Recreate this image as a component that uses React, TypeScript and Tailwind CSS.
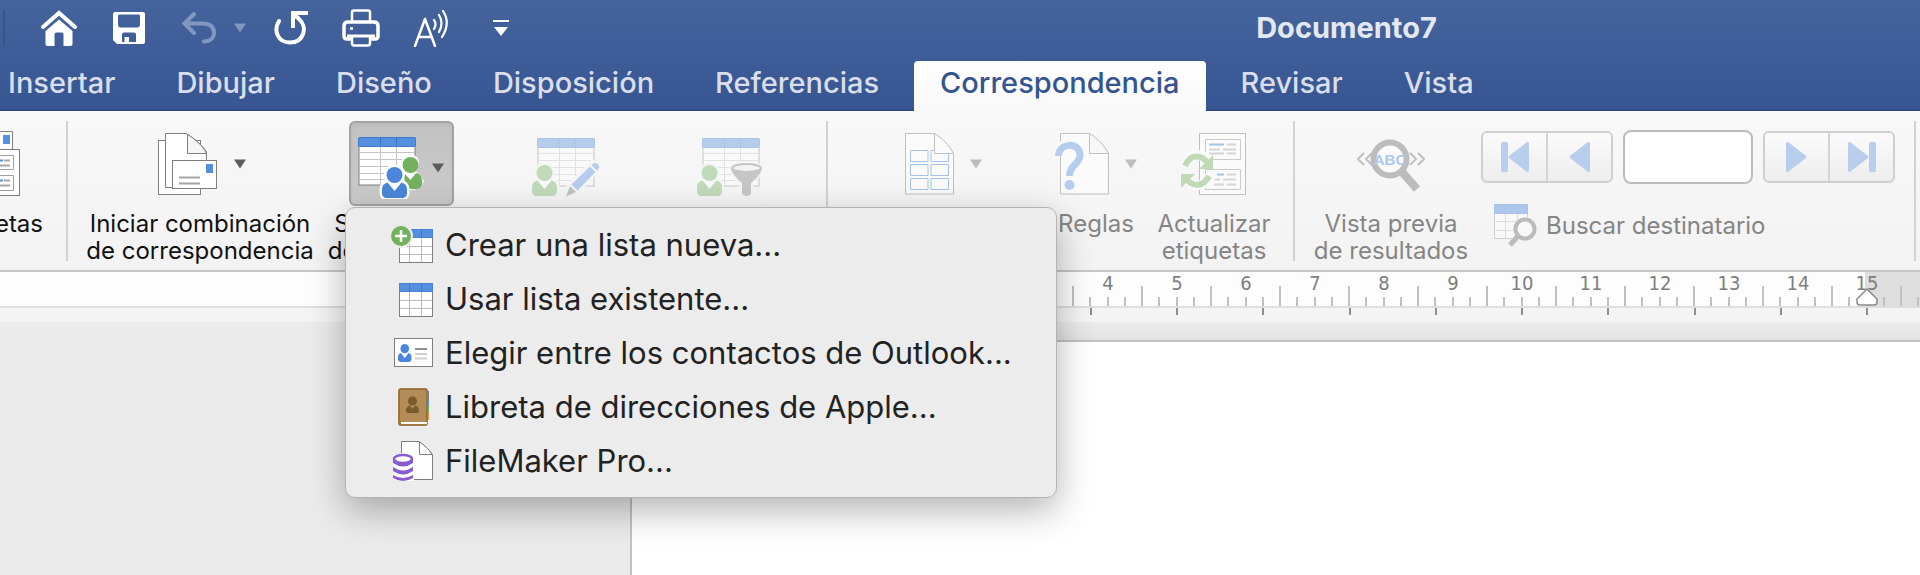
import type { ReactNode } from "react";

const tabs = ["Insertar", "Dibujar", "Diseño", "Disposición", "Referencias", "Correspondencia", "Revisar", "Vista"];

const activeTab = "Correspondencia";

const rulerNumbers = [4, 5, 6, 7, 8, 9, 10, 11, 12, 13, 14, 15];

function Caret({ className = "text-[#5c5c5c]" }: { className?: string }) {
  return (
    <svg className={`shrink-0 ${className}`} width="12" height="10" viewBox="0 0 12 10" fill="currentColor">
      <path d="M0 0.5H12L6 9.5Z" />
    </svg>
  );
}

function Person({ x, y, fill, halo }: { x: number; y: number; fill: string; halo: string }) {
  const body =
    "M5.500 15.500C1.800 16.500 0 19 0 22.500V26C0 29 2 31 5 31H20C23 31 25 29 25 26V22.500C25 19 23.200 16.500 19.500 15.500L12.500 24Z";
  return (
    <g transform={`translate(${x} ${y})`}>
      <circle cx="12.500" cy="8" r="8" fill={halo} stroke={halo} strokeWidth="5" />
      <path d={body} fill={halo} stroke={halo} strokeWidth="5" />
      <path d="M7 15H18L12.500 24Z" fill="#fff" />
      <path d={body} fill={fill} />
      <circle cx="12.500" cy="8" r="8" fill={fill} />
    </g>
  );
}

function Sheet() {
  return (
    <g>
      <rect x="1" y="1" width="56" height="47" fill="#fff" stroke="#7f7f7f" />
      <path d="M1 15.500H57M1 22.500H57M1 29.500H57M1 36.500H57M1 42.500H57M22.500 10V48M38.500 10V48" stroke="#c4c4c4" fill="none" />
      <rect x="0.500" y="0.500" width="57" height="9" rx="1" fill="#5590e0" stroke="#4079c8" />
      <path d="M22.500 1V9M38.500 1V9" stroke="#3f76c2" />
    </g>
  );
}

function RecipientsIcon() {
  return (
    <svg width="66" height="62" viewBox="0 0 66 62" className="shrink-0">
      <Sheet />
      <path d="M44 40Q38 22 52 17Q66 20 58 34L66 44Q64 54 50 53Z" fill="#fff" />
      <path d="M47 37C44 38 48 53 55 52H59C64 51 65 47 64 43C63 38 61 37 58 36L52.500 43Z" fill="#74b15f" />
      <circle cx="52.500" cy="28" r="8" fill="#74b15f" />
      <Person x={24} y={30} fill="#4b86dc" halo="#fff" />
    </svg>
  );
}

function EditRecipientsIcon() {
  return (
    <svg width="68" height="60" viewBox="0 0 68 60" className="shrink-0 opacity-40">
      <g transform="translate(5 0)">
        <Sheet />
      </g>
      <Person x={0} y={27} fill="#74b15f" halo="#f5f5f5" />
      <path d="M34 59L37 47L60 24Q66 23 68 29L45 55Z" fill="#f5f5f5" stroke="#f5f5f5" strokeWidth="4" />
      <path d="M34 58.500L38 48L44 54Z" fill="#777" />
      <path d="M39.500 46.500L58 28.500L63.500 34L45.500 52.500Z" fill="#5590e0" />
      <path d="M59.500 27C62 24.500 64 24.500 66 26.500S67.500 30 65 32.500Z" fill="#5590e0" />
    </svg>
  );
}

function FilterRecipientsIcon() {
  return (
    <svg width="66" height="60" viewBox="0 0 66 60" className="shrink-0 opacity-40">
      <g transform="translate(5 0)">
        <Sheet />
      </g>
      <Person x={0} y={27} fill="#74b15f" halo="#f5f5f5" />
      <path d="M34 30Q36 25 49 25T65 30Q62 38 54 45V58H44V45Q36 38 34 30Z" fill="#f5f5f5" stroke="#f5f5f5" strokeWidth="4" />
      <path d="M34 30Q35 37 45 45V56Q49.500 60 54 56V45Q64 37 65 30Z" fill="#7f7f7f" />
      <ellipse cx="49.500" cy="30" rx="14.500" ry="4" fill="#f0f0f0" stroke="#7f7f7f" strokeWidth="2" />
    </svg>
  );
}

function MergeIcon() {
  return (
    <svg width="64" height="62" viewBox="-4 0 64 62" className="shrink-0">
      <rect x="0.500" y="7.500" width="42" height="54" fill="#fff" stroke="#7f7f7f" />
      <path d="M7.500 0.500H28C36 5 44 12 48.500 19V54.500H7.500Z" fill="#fff" stroke="#7f7f7f" />
      <path d="M29.500 1.500V20.500H48.500C45 13 37 6 29.500 1.500Z" fill="#f5f5f5" stroke="#7f7f7f" />
      <rect x="14.500" y="27.500" width="44" height="28" fill="#fff" stroke="#7f7f7f" />
      <rect x="48" y="31" width="7" height="9" fill="#5590e0" />
      <path d="M21 44.500H42M21 50.500H42" stroke="#a6a6a6" strokeWidth="2" />
    </svg>
  );
}

function EnvelopesIcon() {
  return (
    <svg width="60" height="66" viewBox="0 0 60 66" className="shrink-0">
      <path d="M8 0.500H52.500V30H8Z" fill="#fff" stroke="#7f7f7f" />
      <rect x="43" y="4" width="7" height="9" fill="#5590e0" />
      <rect x="8" y="18.500" width="51.500" height="46" fill="#fff" stroke="#7f7f7f" />
      <path d="M20 24.500H53.500V38.500H20ZM20 44.500H53.500V59.500H20Z" fill="none" stroke="#a0a0a0" />
      <path d="M24 29.500H43M24 49.500H43" stroke="#5590e0" strokeWidth="2" />
      <path d="M44 29.500H50M24 34.500H50M44 49.500H50M24 54.500H50" stroke="#a6a6a6" strokeWidth="2" />
    </svg>
  );
}

function LabelsIcon() {
  return (
    <svg width="49" height="62" viewBox="0 0 49 62" className="shrink-0 opacity-50">
      <path d="M0.500 0.500H29C37 5 44 12 48.500 20.500V61H0.500Z" fill="#fff" stroke="#8b8b8b" />
      <path
        d="M5.500 17.500H23V28.500H5.500ZM26 17.500H43.500V28.500H26ZM5.500 31.500H23V42.500H5.500ZM26 31.500H43.500V42.500H26ZM5.500 45.500H23V56.500H5.500ZM26 45.500H43.500V56.500H26Z"
        fill="#fff"
        stroke="#5590e0"
      />
      <path d="M29.500 0.500C37 5 44 12 48.500 20.500H29.500Z" fill="#fff" stroke="#8b8b8b" />
    </svg>
  );
}

function RulesIcon() {
  return (
    <svg width="54" height="62" viewBox="0 0 54 62" className="shrink-0 opacity-50">
      <path d="M5.500 0.500H34C42 5 49 12 53.500 20.500V61H5.500Z" fill="#fff" stroke="#8b8b8b" />
      <path d="M34.500 0.500C42 5 49 12 53.500 20.500H34.500Z" fill="#fafafa" stroke="#8b8b8b" />
      <path d="M2 23C5 7 25 9 25 22C25 31 15 31 15 44" fill="none" stroke="#fff" strokeWidth="11" />
      <path d="M3.500 23C4 9 25 9 25 22C25 32 14.500 31 14.500 43" fill="none" stroke="#76a4e6" strokeWidth="7" />
      <circle cx="14.500" cy="52" r="5" fill="#76a4e6" />
    </svg>
  );
}

function UpdateLabelsIcon() {
  return (
    <svg width="66" height="62" viewBox="0 0 66 62" className="shrink-0 opacity-50">
      <rect x="18.500" y="0.500" width="46" height="61" fill="#fff" stroke="#8b8b8b" />
      <path d="M24.500 6.500H59.500V26.500H24.500ZM24.500 36.500H59.500V56.500H24.500Z" fill="none" stroke="#a0a0a0" />
      <path d="M28 11.500H43M36 41.500H43" stroke="#5590e0" strokeWidth="2" />
      <path
        d="M46 11.500H55M28 16.500H39M42 16.500H55M28 20.500H43M46 20.500H55M46 41.500H55M34 46.500H39M42 46.500H55M33 51.500H43M46 51.500H55"
        stroke="#b5b5b5"
        strokeWidth="2"
      />
      <path d="M3 34C8 18 22 20 27 28M29 43C22 56 11 54 5 46" fill="none" stroke="#fff" strokeWidth="10" />
      <path d="M4 33C9 21 20 21 26 29" fill="none" stroke="#8bbf79" strokeWidth="6" />
      <path d="M32 22V36H18Z" fill="#8bbf79" />
      <path d="M28 43C22 54 13 54 6 47" fill="none" stroke="#8bbf79" strokeWidth="6" />
      <path d="M0 55V41H14Z" fill="#8bbf79" />
    </svg>
  );
}

function PreviewIcon() {
  return (
    <svg width="68" height="60" viewBox="0 0 68 60" className="shrink-0 opacity-45">
      <path d="M7 19L1 25L7 31M15 19L9 25L15 31M53 19L59 25L53 31M61 19L67 25L61 31" fill="none" stroke="#7f7f7f" strokeWidth="2" />
      <path d="M45 38L60 55" stroke="#777" strokeWidth="8" />
      <circle cx="33" cy="25" r="16.500" fill="#fff" stroke="#777" strokeWidth="6" />
      <text
        x="33"
        y="31"
        textAnchor="middle"
        fontSize="15"
        fontWeight="700"
        fontFamily="'Liberation Sans Narrow', 'Liberation Sans', sans-serif"
        fill="#5590e0"
      >
        ABC
      </text>
    </svg>
  );
}

function FindRecipientIcon() {
  return (
    <svg width="43" height="43" viewBox="0 0 43 43" className="shrink-0 opacity-45">
      <rect x="0.500" y="0.500" width="33" height="34" fill="#fff" stroke="#a0a0a0" />
      <path d="M0 17.500H33M0 26.500H33M11.500 9V34M23.500 9V34" stroke="#c4c4c4" />
      <rect x="0.500" y="0.500" width="33" height="9" fill="#5590e0" stroke="#4a85d6" />
      <circle cx="31" cy="25" r="12" fill="#f5f5f5" />
      <path d="M24 32L16 41" stroke="#777" strokeWidth="5" />
      <circle cx="31" cy="25" r="9.500" fill="#fff" stroke="#777" strokeWidth="4" />
    </svg>
  );
}

function SmallTable({ add = false }: { add?: boolean }) {
  return (
    <svg width="42" height="38" viewBox="0 0 42 38">
      <rect x="8.500" y="3.500" width="33" height="33" fill="#fff" stroke="#7f7f7f" />
      <path d="M9 20.500H41M9 28.500H41M18.500 12V36M30.500 12V36" stroke="#bdbdbd" />
      <rect x="8.500" y="3.500" width="33" height="8" fill="#5590e0" stroke="#4a82d2" />
      <path d="M18.500 4V11M30.500 4V11" stroke="#3f76c2" />
      {add && (
        <g>
          <circle cx="10" cy="10" r="12" fill="#ececec" />
          <circle cx="10" cy="10" r="10" fill="#74b15f" />
          <path d="M10 4V16M4 10H16" stroke="#fff" strokeWidth="2.500" />
        </g>
      )}
    </svg>
  );
}

function ContactCard() {
  return (
    <svg width="42" height="38" viewBox="0 0 42 38">
      <rect x="3.500" y="4.500" width="38" height="28" fill="#fff" stroke="#7f7f7f" />
      <g transform="translate(7 10) scale(0.54 0.58)">
        <Person x={0} y={0} fill="#4b86dc" halo="#fff" />
      </g>
      <path d="M24 15H36" stroke="#8f8f8f" strokeWidth="2" />
      <path d="M24 20H36M24 24.500H36" stroke="#d0d0d0" strokeWidth="2" />
    </svg>
  );
}

function AddressBook() {
  return (
    <svg width="42" height="40" viewBox="0 0 42 40">
      <rect x="33" y="4" width="5" height="9" fill="#7d7d7d" />
      <rect x="33" y="12" width="5" height="7" fill="#5590e0" />
      <rect x="33" y="19" width="5" height="7" fill="#74b15f" />
      <rect x="33" y="26" width="5" height="7" fill="#f0923f" />
      <rect x="7" y="1" width="30" height="38" rx="3" fill="#a17a45" />
      <rect x="8.500" y="2.500" width="27" height="33" rx="2" fill="#b38c57" stroke="#94703f" />
      <path d="M10 36H36" stroke="#fff" strokeWidth="2" />
      <circle cx="21.500" cy="14" r="4.500" fill="#7b5a2b" />
      <path d="M15 24Q15 19 19 18.500L21.500 22L24 18.500Q28 19 28 24Q28 26 25 26H18Q15 26 15 24Z" fill="#7b5a2b" />
    </svg>
  );
}

function FileMaker() {
  return (
    <svg width="42" height="40" viewBox="0 0 42 40">
      <path d="M10.500 0.500H28C33 4 38 8 41.500 13.500V38.500H10.500Z" fill="#fff" stroke="#7f7f7f" />
      <path d="M28.500 1V13.500H41C38 8 33 4 28.500 1Z" fill="#fff" stroke="#7f7f7f" />
      <path d="M0 12H23V40H0Z" fill="#ececec" />
      <path d="M12 12H23V40H12Z" fill="#fff" />
      <path d="M2 14H22V38Q12 42 2 38Z" fill="#fff" />
      <path d="M2 18V22Q12 29 22 22V18ZM2 26V30Q12 37 22 30V26Q12 33 2 26ZM2 34V37Q12 43 22 37V34Q12 40 2 34Z" fill="#8a5bd0" />
      <ellipse cx="12" cy="18" rx="9" ry="4" fill="#fff" stroke="#8a5bd0" strokeWidth="2.500" />
    </svg>
  );
}

const menuItems: { label: string; icon: ReactNode }[] = [
  { label: "Crear una lista nueva...", icon: <SmallTable add /> },
  { label: "Usar lista existente...", icon: <SmallTable /> },
  { label: "Elegir entre los contactos de Outlook...", icon: <ContactCard /> },
  { label: "Libreta de direcciones de Apple...", icon: <AddressBook /> },
  { label: "FileMaker Pro...", icon: <FileMaker /> },
];

function QuickButton({ label, children }: { label: string; children: ReactNode }) {
  return (
    <button aria-label={label} className="flex w-[70px] shrink-0 items-center justify-center text-white">
      {children}
    </button>
  );
}

function QuickAccess() {
  return (
    <div className="flex h-14 items-center pl-[3px]">
      <div className="h-9 w-[2px] bg-[#375488]" />
      <div className="flex pl-[19px]">
        <QuickButton label="Inicio">
          <svg width="36" height="36" viewBox="0 0 36 36" fill="none">
            <path d="M2 17L18 3L34 17" stroke="currentColor" strokeWidth="4" strokeLinecap="round" strokeLinejoin="miter" />
            <path d="M18 9.500L31.500 21V34Q31.500 36 29.500 36H22.500V24.500Q22.500 22.500 20.500 22.500H15.500Q13.500 22.500 13.500 24.500V36H6.500Q4.500 36 4.500 34V21Z" fill="currentColor" />
          </svg>
        </QuickButton>
        <QuickButton label="Guardar">
          <svg width="32" height="32" viewBox="0 0 32 32" fill="currentColor" fillRule="evenodd">
            <path d="M2 0H30Q32 0 32 2V30Q32 32 30 32H4L0 28V2Q0 0 2 0ZM6 2.500Q5 2.500 5 4V12Q5 15.500 8 15.500H24Q27 15.500 27 12V4Q27 2.500 26 2.500ZM11 20.500Q9 20.500 9 22.500V30H11.500V25H16V30H23V22.500Q23 20.500 21 20.500Z" />
          </svg>
        </QuickButton>
        <QuickButton label="Deshacer">
          <svg width="34" height="32" viewBox="0 0 34 32" fill="none" stroke="#8297c0" strokeWidth="4" strokeLinecap="round">
            <path d="M12 2L2.500 11.500L12 21M3 11.500H20C28 11.500 32 15 32 20.500C32 26 28 29.500 22 29.500" />
          </svg>
        </QuickButton>
        <button aria-label="Opciones de deshacer" className="flex w-[22px] items-center">
          <Caret className="text-[#8297c0]" />
        </button>
        <QuickButton label="Rehacer">
          <svg width="34" height="34" viewBox="0 0 34 34" fill="none" stroke="currentColor" strokeWidth="4">
            <path d="M5 10C-1 20 4 31.500 16 31.500C30 31.500 34 16 25 8Q22 5 19 3" strokeLinecap="round" />
            <path d="M34 2H19V17" />
          </svg>
        </QuickButton>
        <QuickButton label="Imprimir">
          <svg width="38" height="38" viewBox="0 0 38 38" fill="none" stroke="currentColor" strokeWidth="2.500">
            <path d="M10 13V3.500Q10 1.500 12 1.500H26Q28 1.500 28 3.500V13" />
            <path d="M9 30H5Q2 30 2 27V17Q2 13 6 13H32Q36 13 36 17V27Q36 30 33 30H29" strokeWidth="3.500" />
            <path d="M5 27H33" strokeWidth="3" />
            <path d="M10 28V34Q10 36.500 12 36.500H26Q28 36.500 28 34V28" />
            <path d="M8 19.500H11" />
          </svg>
        </QuickButton>
        <QuickButton label="Leer en voz alta">
          <svg width="37" height="38" viewBox="0 0 37 38" fill="none" stroke="currentColor" strokeWidth="2.500" strokeLinecap="round" strokeLinejoin="round">
            <path d="M2 37L12 10L22 37M5.500 28H18.500" />
            <path d="M21 11Q24 15 21 20M26 6Q31 14 26 23M30 2Q38 14 29 28" strokeWidth="2.200" />
          </svg>
        </QuickButton>
        <QuickButton label="Personalizar barra">
          <svg width="16" height="16" viewBox="0 0 16 16" fill="currentColor">
            <path d="M0 0H16V2H0ZM1 7H15L8 16Z" />
          </svg>
        </QuickButton>
      </div>
      <h1 className="flex-1 pl-[237px] text-center text-[29px] leading-8 font-bold whitespace-nowrap text-[#e3e7f0]">Documento7</h1>
    </div>
  );
}

function Tabs() {
  return (
    <nav className="flex gap-[9px] pt-[5px]">
      {tabs.map((tab, index) => (
        <button
          key={tab}
          className={
            tab === activeTab
              ? "h-[50px] rounded-t bg-gradient-to-b from-white to-[#f8f8f8] px-[26px] pb-[7px] text-[29px] font-medium text-[#34558f]"
              : index === 0
                ? "h-[50px] pr-[26px] pb-[7px] pl-2 text-[29px] font-medium text-[#d9deea]"
                : "h-[50px] px-[26px] pb-[7px] text-[29px] font-medium text-[#d9deea]"
          }
        >
          {tab}
        </button>
      ))}
    </nav>
  );
}

function Tool({ className, icon, lines, caret, disabled, name }: {
  className: string;
  icon: ReactNode;
  lines?: string[];
  caret?: boolean;
  disabled?: boolean;
  name?: string;
}) {
  return (
    <button
      aria-label={name}
      disabled={disabled}
      className={`flex shrink-0 flex-col items-center text-[24px] leading-[27px] whitespace-nowrap ${disabled ? "text-[#858585]" : "text-[#111]"} ${className}`}
    >
      <span className="flex h-[85px] items-center gap-4">
        {icon}
        {caret && <Caret className={disabled ? "text-[#bdbdbd]" : "text-[#5c5c5c]"} />}
      </span>
      <span className="mt-1">
        {lines?.map((line) => (
          <span key={line} className="block">
            {line}
          </span>
        ))}
      </span>
    </button>
  );
}

function Separator() {
  return <div className="h-[140px] w-[2px] shrink-0 bg-[#d2d2d2]" />;
}

function NavPair({ labels, children }: { labels: string[]; children: ReactNode[] }) {
  return (
    <div className="flex h-[52px] w-[132px] divide-x-2 divide-[#d4d4d4] rounded-md border-2 border-[#cfcfcf] bg-gradient-to-b from-[#fbfbfb] to-[#ededed]">
      {labels.map((label, index) => (
        <button key={label} aria-label={label} disabled className="flex flex-1 items-center justify-center text-[#b9cdec]">
          {children[index]}
        </button>
      ))}
    </div>
  );
}

function Ribbon() {
  return (
    <div className="flex h-[161px] items-start border-b-2 border-[#c6c6c6] bg-gradient-to-b from-[#f8f8f8] to-[#f3f3f3] pt-[10px]">
      <div className="flex w-[66px] shrink-0 justify-end overflow-hidden pr-[23px]">
        <button className="flex shrink-0 flex-col items-end text-[24px] leading-[27px] text-[#111]">
          <span className="flex h-[85px] items-center pr-[23px]">
            <EnvelopesIcon />
          </span>
          <span className="mt-1">Etiquetas</span>
        </button>
      </div>
      <Separator />
      <div className="flex pr-7">
        <Tool className="w-[264px]" icon={<MergeIcon />} lines={["Iniciar combinación", "de correspondencia"]} caret />
        <button
          className="flex w-[138px] flex-col items-center text-[24px] leading-[27px] whitespace-nowrap text-[#111]"
          aria-haspopup="menu"
          aria-expanded
        >
          <span className="flex h-[85px] w-[105px] items-center justify-center gap-2 rounded-md border-2 border-[#a3a3a3] bg-gradient-to-b from-[#c2c2c2] to-[#cbcbcb] pt-2 shadow-inner">
            <RecipientsIcon />
            <Caret />
          </span>
          <span className="mt-1 block">Seleccionar</span>
          <span className="block">destinatarios</span>
        </button>
        <Tool className="w-[192px] pt-1" icon={<EditRecipientsIcon />} name="Editar lista de destinatarios" disabled />
        <Tool className="w-[136px] pt-1" icon={<FilterRecipientsIcon />} name="Filtrar destinatarios" disabled />
      </div>
      <Separator />
      <div className="flex pr-[19px] pl-5">
        <Tool className="w-[190px]" icon={<LabelsIcon />} name="Insertar campo combinado" caret disabled />
        <Tool className="w-[116px]" icon={<RulesIcon />} lines={["Reglas"]} caret disabled />
        <Tool className="w-[120px]" icon={<UpdateLabelsIcon />} lines={["Actualizar", "etiquetas"]} disabled />
      </div>
      <Separator />
      <div className="flex pl-[9px]">
        <Tool className="w-[174px]" icon={<PreviewIcon />} lines={["Vista previa", "de resultados"]} disabled />
        <div className="flex flex-col pt-[9px] pl-[3px]">
          <div className="flex items-center gap-[10px]">
            <NavPair labels={["Primer registro", "Registro anterior"]}>
              <svg width="28" height="30" viewBox="0 0 28 30" fill="currentColor">
                <rect width="7" height="30" rx="2" />
                <path d="M28 1V29Q28 30 26 30L8 16Q7 15 8 14L26 0Q28 0 28 1Z" />
              </svg>
              <svg width="21" height="30" viewBox="0 0 21 30" fill="currentColor">
                <path d="M21 1V29Q21 30 19 30L1 16Q0 15 1 14L19 0Q21 0 21 1Z" />
              </svg>
            </NavPair>
            <input aria-label="Número de registro" className="h-[54px] w-[130px] rounded-lg border-2 border-[#bcbcbc] bg-white px-2" />
            <NavPair labels={["Registro siguiente", "Último registro"]}>
              <svg width="21" height="30" viewBox="0 0 21 30" fill="currentColor">
                <path d="M0 1V29Q0 30 2 30L20 16Q21 15 20 14L2 0Q0 0 0 1Z" />
              </svg>
              <svg width="28" height="30" viewBox="0 0 28 30" fill="currentColor">
                <path d="M0 1V29Q0 30 2 30L20 16Q21 15 20 14L2 0Q0 0 0 1Z" />
                <rect x="21" width="7" height="30" rx="2" />
              </svg>
            </NavPair>
          </div>
          <button disabled className="mt-5 flex items-center gap-[9px] pl-[13px] text-[24px] leading-[27px] whitespace-nowrap text-[#858585]">
            <FindRecipientIcon />
            Buscar destinatario
          </button>
        </div>
      </div>
      <div className="pl-[19px]">
        <Separator />
      </div>
    </div>
  );
}

function Ruler() {
  return (
    <div className="bg-[#f4f4f4]">
      <div className="flex h-[36px] overflow-hidden border-b-2 border-[#dedede] bg-[#fdfdfd]">
        <div className="w-[1072px] shrink-0" />
        {rulerNumbers.map((number) => (
          <div
            key={number}
            className={`relative flex w-[69px] shrink-0 items-end ${number === 15 ? "bg-linear-to-r from-transparent from-50% to-[#dedede] to-50%" : ""}`}
          >
            <span className="h-5 flex-1 border-l-2 border-[#c0c0c0]" />
            <span className="h-[9px] flex-1 border-l-2 border-[#c0c0c0]" />
            <span className="h-[9px] flex-1 border-l-2 border-[#c0c0c0]" />
            <span className="h-[9px] flex-1 border-l-2 border-[#c0c0c0]" />
            <span className="absolute inset-x-0 top-0 pl-[3px] text-center font-['DejaVu_Sans_Condensed','DejaVu_Sans',sans-serif] text-[20px] leading-[22px] text-[#7d7d7d]">
              {number}
            </span>
            {number === 15 && (
              <svg className="absolute bottom-0 left-6" width="24" height="18" viewBox="0 0 24 18">
                <path d="M12 1L22 11V14Q22 17 19 17H5Q2 17 2 14V11Z" fill="#fff" stroke="#8a8a8a" strokeWidth="1.500" />
              </svg>
            )}
          </div>
        ))}
        <div className="flex flex-1 items-end bg-[#dedede]">
          <span className="h-5 w-[17px] border-l-2 border-[#c0c0c0]" />
          <span className="h-[9px] border-l-2 border-[#c0c0c0]" />
        </div>
      </div>
      <div className="flex h-[14px] pl-[1090px]">
        <div className="flex w-[776px] shrink-0">
          {Array.from({ length: 9 }).map((_, index) => (
            <span key={index} className="h-[7px] flex-1 border-l-2 border-[#8f8f8f]" />
          ))}
        </div>
        <span className="h-[7px] border-l-2 border-[#8f8f8f]" />
      </div>
    </div>
  );
}

function RecipientsMenu() {
  return (
    <div
      role="menu"
      className="absolute top-[207px] left-[345px] w-[712px] rounded-[10px] border border-[#b4b4b4] bg-[#ececec] pt-[10px] pb-[9px] shadow-[0_12px_36px_rgba(0,0,0,0.3)]"
    >
      {menuItems.map((item) => (
        <button key={item.label} role="menuitem" className="flex h-[54px] w-full items-center pl-[45px] text-[31px] whitespace-nowrap text-[#222]">
          <span className="flex w-[54px] shrink-0">{item.icon}</span>
          {item.label}
        </button>
      ))}
    </div>
  );
}

export default function App() {
  return (
    <div className="relative flex min-h-screen flex-col overflow-hidden bg-[#ebebeb] font-['Inter','Liberation_Sans',sans-serif]">
      <header className="bg-gradient-to-b from-[#45639c] to-[#375592] shadow-[inset_0_-2px_0_#2d4a85]">
        <QuickAccess />
        <Tabs />
      </header>
      <Ribbon />
      <Ruler />
      <main className="flex flex-1 flex-col pl-[630px]">
        <div className="h-[18px] bg-gradient-to-b from-[#ececec] to-[#e2e2e2]" />
        <div className="flex-1 border-t-2 border-l-2 border-[#c2c2c2] bg-white" />
      </main>
      <RecipientsMenu />
    </div>
  );
}
